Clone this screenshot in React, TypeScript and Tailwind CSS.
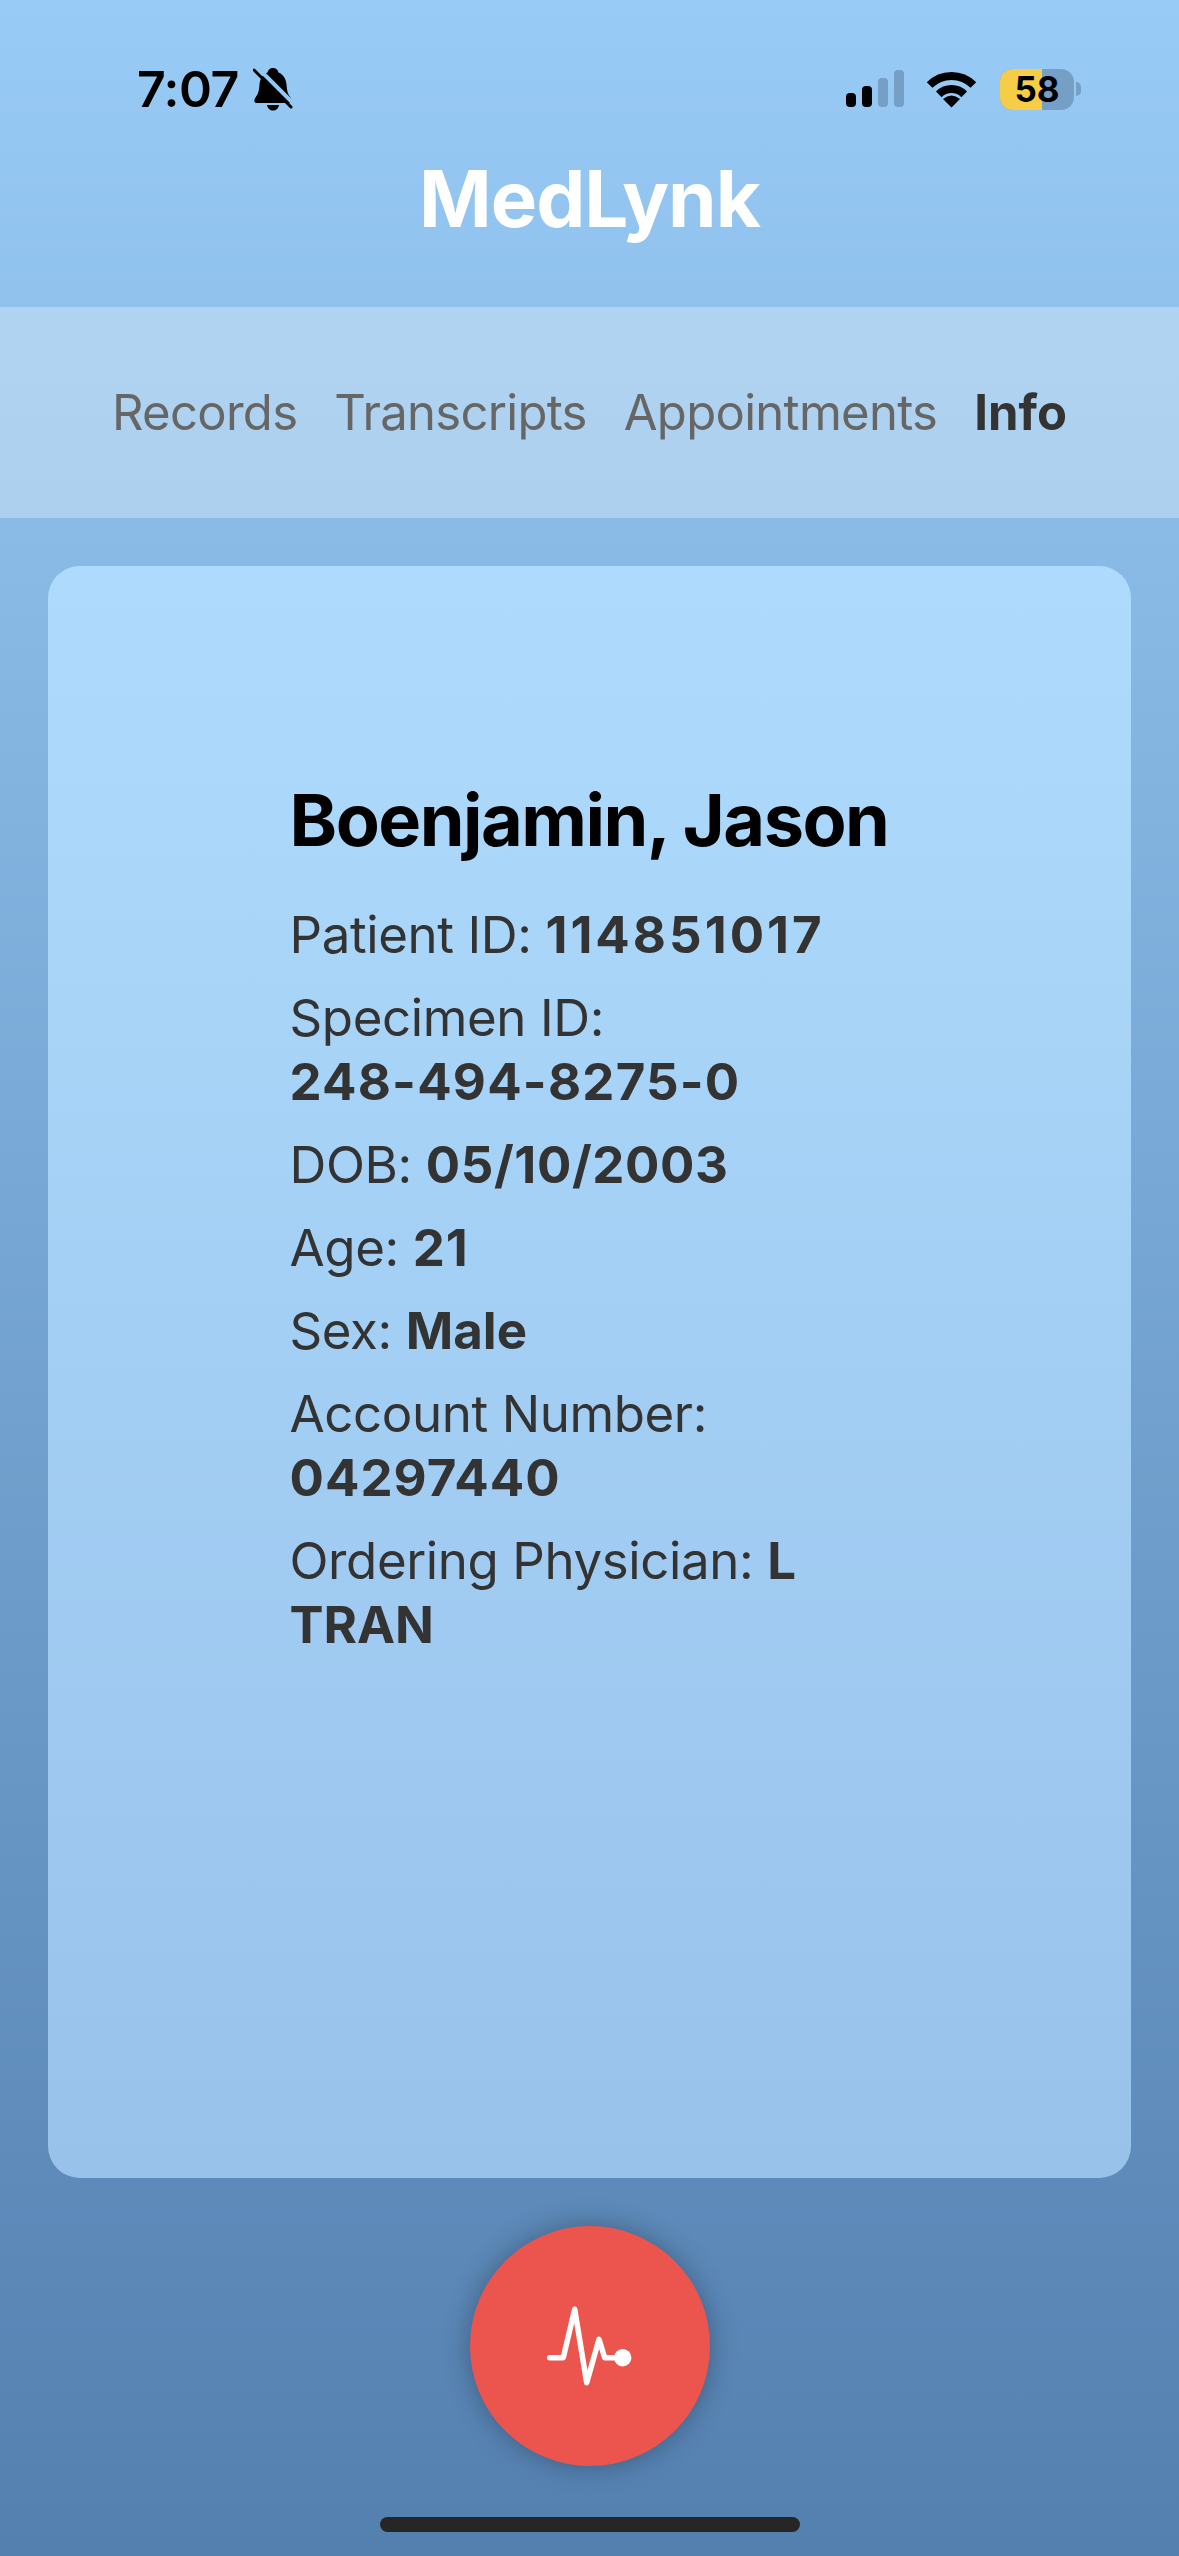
const rows = [
  { label: "Patient ID:", value: "114851017", valueClass: "whitespace-nowrap tracking-[3px]" },
  { label: "Specimen ID:", value: "248-494-8275-0", valueClass: "whitespace-nowrap tracking-[1.2px]" },
  { label: "DOB:", value: "05/10/2003", valueClass: "whitespace-nowrap tracking-[0.6px]" },
  { label: "Age:", value: "21", valueClass: "whitespace-nowrap tracking-[1px]" },
  { label: "Sex:", value: "Male", valueClass: "whitespace-nowrap tracking-[0px]" },
  { label: "Account Number:", value: "04297440", valueClass: "whitespace-nowrap tracking-[1px]" },
  { label: "Ordering Physician:", value: "L TRAN", valueClass: "tracking-[0px]" },
]

function BellOff() {
  return (
    <svg width="40" height="44" viewBox="0 0 40 44" className="ml-[14px]">
      <path
        d="M20 1c3 0 5 2 5.500 4.500 5 2 7.500 6.500 8 12 .5 6 1 9 4 13 1.500 2 2 5-1 5.500H3.500c-3-.5-2.500-3.500-1-5.500 3-4 3.500-7 4-13 .5-5.500 3-10 8-12C15 3 17 1 20 1z"
        fill="#000"
      />
      <path d="M14 38h12c-.5 3.500-3 5.500-6 5.500s-5.500-2-6-5.500z" fill="#000" />
      <path d="M5 1 L41 37" stroke="#95c9f3" strokeWidth="4" />
      <path d="M1 3 L38 40" stroke="#000" strokeWidth="3" strokeLinecap="round" />
    </svg>
  )
}

function Signal() {
  return (
    <svg width="58" height="38" viewBox="0 0 58 38">
      <rect x="0" y="23" width="10" height="14" rx="4" fill="#000" />
      <rect x="16" y="16" width="10" height="21" rx="4" fill="#000" />
      <rect x="32" y="8" width="10" height="29" rx="4" fill="#769fc6" />
      <rect x="48" y="0" width="10" height="37" rx="4" fill="#769fc6" />
    </svg>
  )
}

function Wifi() {
  return (
    <svg width="51" height="37" viewBox="0 0 51 37">
      <path d="M3.600 14A31 31 0 0 1 47.400 14" stroke="#000" strokeWidth="8" fill="none" />
      <path d="M12.800 23.300A18 18 0 0 1 38.200 23.300" stroke="#000" strokeWidth="8" fill="none" />
      <path d="M25.500 36.500L17 28Q25.500 21 34 28z" fill="#000" />
    </svg>
  )
}

function Pulse() {
  return (
    <svg width="100" height="100" viewBox="0 0 100 100">
      <path
        d="M9.700 61.700H23.300L34.700 13.300L46.700 86.700L59 43.300L64.700 61.700H82.700"
        stroke="#fff"
        strokeWidth="5.500"
        strokeLinecap="round"
        strokeLinejoin="round"
        fill="none"
      />
      <circle cx="82.700" cy="61.700" r="8.700" fill="#fff" />
    </svg>
  )
}

export default function App() {
  return (
    <div className="flex h-[2556px] w-[1179px] flex-col overflow-hidden bg-gradient-to-b from-[#98cbf5] to-[#5480b0] font-['Inter',sans-serif]">
      {/* status bar */}
      <div className="flex items-center justify-between pl-[137px] pr-[98px] pt-[67px]">
        <div className="flex h-[44px] items-center">
          <span className="text-[50px] font-semibold leading-[44px] tracking-[-0.5px] text-black">7:07</span>
          <BellOff />
        </div>
        <div className="flex items-center">
          <Signal />
          <div className="ml-[22px]">
            <Wifi />
          </div>
          <div className="relative ml-[23px] flex h-[41px] w-[74px] items-center justify-center overflow-hidden rounded-[13px] bg-[#769fc6]">
            <div className="absolute inset-y-0 left-0 w-[42px] bg-[#f6cd46]" />
            <span className="relative text-[35px] font-bold leading-none text-black">58</span>
          </div>
          <div className="ml-[2px] h-[14px] w-[5px] rounded-r-full bg-[#769fc6]" />
        </div>
      </div>

      <h1 className="mt-[45px] h-[86px] text-center text-[78px] font-bold leading-[86px] tracking-[-1px] text-white">MedLynk</h1>

      {/* tabs */}
      <nav className="mt-[65px] flex h-[211px] shrink-0 items-center justify-center gap-[37px] bg-white/30 text-[49px] tracking-[-0.7px]">
        <span className="text-[#666666]">Records</span>
        <span className="text-[#666666]">Transcripts</span>
        <span className="text-[#666666]">Appointments</span>
        <span className="font-bold tracking-[0px] text-[#333333]">Info</span>
      </nav>

      {/* patient card */}
      <div className="mx-[48px] mt-[48px] h-[1612px] shrink-0 rounded-[32px] bg-gradient-to-b from-[#aedbfd] to-[#99c2eb] pt-[213px]">
        <div className="mx-auto w-[600px]">
          <h2 className="mb-[42px] whitespace-nowrap text-[72px] font-bold leading-[82px] tracking-[-1.5px] text-black">Boenjamin, Jason</h2>
          {rows.map(row => (
            <p key={row.label} className="mb-[19px] text-[51px] leading-[64px] tracking-[-0.4px] text-[#333333]">
              {row.label} <span className={"font-bold " + row.valueClass}>{row.value}</span>
            </p>
          ))}
        </div>
      </div>

      <div className="mx-auto mt-[48px] flex h-[240px] w-[240px] shrink-0 items-center justify-center rounded-full bg-[#ec554e] shadow-[0_0_28px_rgba(0,0,0,0.3)]">
        <Pulse />
      </div>

      <div className="mx-auto mt-[51px] h-[15px] w-[420px] shrink-0 rounded-full bg-[#262626]" />
    </div>
  )
}
